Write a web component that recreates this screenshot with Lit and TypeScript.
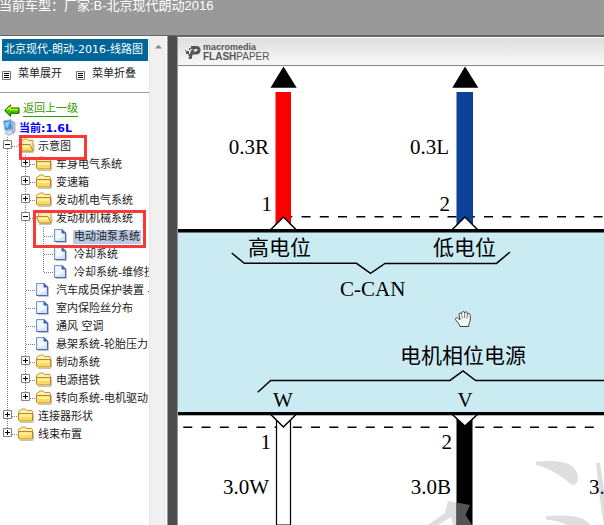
import { LitElement, html, css, svg, nothing } from "lit";
import { customElement, property, state } from "lit/decorators.js";
import { classMap } from "lit/directives/class-map.js";

interface TreeNode {
  label: string;
  children?: TreeNode[];
  folder?: boolean;
  open?: boolean;
  selected?: boolean;
  mark?: "single" | "pair";
}

const folder = (label: string): TreeNode => ({ label, folder: true });

const TREE: TreeNode[] = [
  {
    label: "示意图",
    folder: true,
    open: true,
    mark: "single",
    children: [
      folder("车身电气系统"),
      folder("变速箱"),
      folder("发动机电气系统"),
      {
        label: "发动机机械系统",
        folder: true,
        open: true,
        mark: "pair",
        children: [
          { label: "电动油泵系统", selected: true },
          { label: "冷却系统" },
          { label: "冷却系统-维修技" },
        ],
      },
      { label: "汽车成员保护装置 -" },
      { label: "室内保险丝分布" },
      { label: "通风 空调" },
      { label: "悬架系统-轮胎压力" },
      folder("制动系统"),
      folder("电源搭铁"),
      folder("转向系统-电机驱动"),
    ],
  },
  folder("连接器形状"),
  folder("线束布置"),
];

const closedFolder = svg`
  <path d="M2 15.500h12.500q1 0 1-1v-8" fill="none" stroke="#aaa" stroke-opacity=".7"/>
  <path d="M.5 12.500V5l1-1.500h1l1-1.500h4l1 1.500h5.500l.5 1v8.500z" fill="#fff0b0" stroke="#c79a2e"/>
  <path d="M.5 6.500h14v7.500h-13l-1-1z" fill="#ffd95c" stroke="#b8892a"/>
  <path d="M1.500 7.500h12v2.500h-12z" fill="#fff0a0"/>`;

const openFolder = svg`
  <path d="M3 15.500h12l1-2v-6" fill="none" stroke="#aaa" stroke-opacity=".7"/>
  <path d="M2.500 12V4.500l1-1h1l1-1.500h4l1 1.500h4.500v10.500h-11z" fill="#fff0b0" stroke="#c79a2e"/>
  <path d="M.5 7.500h11.500l3 6.500h-12z" fill="#ffdf6a" stroke="#b8892a"/>
  <path d="M2 8.500h9.500l1 2h-9.500z" fill="#fff3b0"/>`;

const filePage = svg`
  <path d="M2 15.500h10.500V6" fill="none" stroke="#aaa" stroke-opacity=".7"/>
  <path d="M.5 2.500h7.500l3.500 3.500v8.500h-11z" fill="#d3e4fb" stroke="#7a94d4"/>
  <path d="M1.500 3.500h6v3.500h2v3l-8 3z" fill="#f3f8ff"/>
  <path d="M.5 14.500h11V6" fill="none" stroke="#4a68b4"/>
  <path d="M8 2.500v3.500h3.500z" fill="#4766b2" stroke="#4766b2"/>`;

@customElement("tree-view")
export class TreeView extends LitElement {
  @property({ attribute: false }) nodes: TreeNode[] = [];

  static styles = css`
    :host { display: block; }
    ul { list-style: none; margin: 0; padding: 0; }
    .row {
      position: relative;
      display: flex;
      align-items: center;
      height: 18px;
      white-space: nowrap;
    }
    .cell { flex: none; width: 18px; height: 18px; display: block; }
    .toggle { border: 0; padding: 0; background: none; cursor: pointer; }
    .label {
      color: #222;
      text-decoration: none;
      margin: 2px 0 0 1px;
      padding: 0 1px;
      line-height: 14px;
    }
    .selected { background: #b9cae8; }
    .mark {
      position: absolute;
      box-sizing: border-box;
      border: 3px solid #f93838;
      pointer-events: none;
      z-index: 1;
    }
    .single { left: 19px; top: -2px; width: 68px; height: 25px; }
    .pair { left: 33px; top: 1px; width: 113px; height: 38px; }
  `;

  private flip(node: TreeNode) {
    node.open = !node.open;
    this.requestUpdate();
  }

  private guide(d: string) {
    return svg`<path d=${d} stroke="#808080" stroke-dasharray="1 1" fill="none"/>`;
  }

  private renderNode(node: TreeNode, trail: boolean[], last: boolean): unknown {
    const lines = this.guide(last ? "M7.5 0V10M8 9.500H18" : "M7.5 0V18M8 9.500H18");
    return html`<li>
      <div class="row">
        ${trail.map((on) => html`<svg class="cell" aria-hidden="true">${on ? this.guide("M7.5 0V18") : nothing}</svg>`)}
        ${node.folder
          ? html`<button class="toggle" aria-label=${node.label} aria-expanded=${!!node.open} @click=${() => this.flip(node)}>
              <svg class="cell">
                ${lines}
                <path d="M3.500 3.500h8v8h-8z" fill="#fff" stroke="#808080" />
                <path d=${node.open ? "M5 7.500h5" : "M5 7.500h5M7.500 5v5"} stroke="#000" />
              </svg>
            </button>`
          : html`<svg class="cell" aria-hidden="true">${lines}</svg>`}
        <svg class="cell" aria-hidden="true">${node.folder ? (node.open ? openFolder : closedFolder) : filePage}</svg>
        <a href="#" class=${classMap({ label: true, selected: !!node.selected })}>${node.label}</a>
        ${node.mark ? html`<span class="mark ${node.mark}"></span>` : nothing}
      </div>
      ${node.children && node.open ? this.renderList(node.children, [...trail, !last]) : nothing}
    </li>`;
  }

  private renderList(nodes: TreeNode[], trail: boolean[]): unknown {
    return html`<ul>${nodes.map((n, i) => this.renderNode(n, trail, i === nodes.length - 1))}</ul>`;
  }

  render() {
    return this.renderList(this.nodes, []);
  }
}

@customElement("wiring-diagram")
export class WiringDiagram extends LitElement {
  static styles = css`
    :host { display: block; }
    .sheet { display: block; width: 100%; height: auto; }
    .text {
      font-family: "Liberation Serif", "Noto Sans CJK SC", serif;
      font-size: 21px;
      fill: #000;
    }
    .end { text-anchor: end; }
    .mid { text-anchor: middle; }
    .line { fill: none; stroke: #000; stroke-width: 1.5; }
    .dash { fill: none; stroke: #000; stroke-width: 1.5; stroke-dasharray: 9 9.25; }
    .tip { fill: #fff; stroke: #000; stroke-width: 1.5; }
    .stain { fill: #808080; fill-opacity: 0.26; }
    .stain-dark { fill: #555; }
  `;

  render() {
    return html`<svg class="sheet" viewBox="178 66 426 459" role="img" aria-label="C-CAN">
      <rect x="178" y="230" width="426" height="184" fill="#cbebf2" />
      <path class="dash" d="M283.300 216.700H604" />
      <path class="dash" d="M183.300 427.300H600" />
      <path d="M283.500 66.500L296.700 87.700H270.500zM465 66.500L478.300 87.700H452.300z" />
      <rect x="275.500" y="92" width="15.500" height="137" fill="#f00" />
      <rect x="456.500" y="92" width="16.500" height="137" fill="#0b4199" />
      <path d="M276.500 416V525H290.500V416" fill="#fff" stroke="#000" stroke-width="1.200" />
      <rect x="456.500" y="416" width="16" height="109" />
      <path class="tip" d="M270.800 229.500L283.400 217L296 229.500M452.300 229.500L464.900 217L477.500 229.500" />
      <path class="tip" d="M270.800 414.500L283.400 427L296 414.500M452.300 414.500L464.900 426L477.500 414.500" />
      <rect x="178" y="229" width="426" height="3.500" />
      <rect x="178" y="412" width="426" height="3.300" />
      <path class="line" d="M231.700 253L244.300 263.300H356.500L370.500 273.300L385 263.400H496.500L510 252" />
      <path class="line" d="M257.700 392.300L270.700 380.400H450L463 371L475.700 380.600H604" />

      <text class="text end" x="269" y="154">0.3R</text>
      <text class="text end" x="449" y="154">0.3L</text>
      <text class="text end" x="272" y="211">1</text>
      <text class="text end" x="450" y="211">2</text>
      <text class="text" x="248" y="255">高电位</text>
      <text class="text" x="433" y="255">低电位</text>
      <text class="text" x="340" y="296">C-CAN</text>
      <text class="text" x="400" y="363">电机相位电源</text>
      <text class="text mid" x="283" y="407">W</text>
      <text class="text mid" x="465" y="407">V</text>
      <text class="text end" x="271" y="449">1</text>
      <text class="text end" x="452" y="449">2</text>
      <text class="text end" x="269" y="494">3.0W</text>
      <text class="text end" x="451" y="494">3.0B</text>
      <text class="text" x="589" y="494">3.</text>

      <path class="stain" d="M536 461.500C550 460.500 560 460.500 566 463C574 466 578 472 578 478C578 483 575 486 571 484.500C560 474 548 468 536 464.500z" />
      <path class="stain" d="M546 516C560 515 575 515 583 519C587 521 589 523 590 525H568C561 522 553 520 546 519.500z" />
      <path class="stain" d="M596 463L600 462.500L604 490V525L600 500z" />
      <path class="stain" d="M428 525L445 513L448 501L456.500 502.500V525H453L451 517L438 525z" />
      <path class="stain-dark" d="M456.500 502.500L470 505L465.500 515L472 525H456.500z" />

      <path
        d="M460 326.500C459 323 456.500 321.500 455.500 319.500C455 318 457 317 458.500 318.500L460 320L459 314.500C459 312.500 461 312.500 461.500 314L462 312.500C462.500 311 464.500 311 464.700 313C465 311 467.500 311.500 467.500 314C468.500 312.800 470.300 313.500 470.300 315.500C470.500 319 470.500 321.500 468.800 324V326.500z"
        fill="#f8f8f8" stroke="#444" stroke-width="1" />
      <path d="M461.500 314.500L462.500 318.500M464.700 313V318M467.500 314L467 318.500" stroke="#555" stroke-width="0.800" />
    </svg>`;
  }
}

@customElement("app-root")
export class AppRoot extends LitElement {
  @state() private nodes = TREE;

  private setAll(open: boolean) {
    const walk = (n: TreeNode): TreeNode => ({ ...n, open, children: n.children?.map(walk) });
    this.nodes = this.nodes.map(walk);
  }

  static styles = css`
    :host {
      display: flex;
      flex-direction: column;
      height: 100vh;
      overflow: hidden;
      font: 11px/18px "DejaVu Sans", "Noto Sans CJK SC", sans-serif;
      color: #222;
      background: #999;
    }
    .top {
      flex: none;
      box-sizing: border-box;
      height: 36px;
      border-bottom: 1px solid #666;
      color: #fff;
      font: 13px/18px "Liberation Sans", "Noto Sans CJK SC", sans-serif;
      white-space: nowrap;
    }
    .top span { display: block; margin: -3px 0 0 -1px; }
    .frames { flex: 1; min-height: 0; display: flex; }
    .side { flex: none; width: 149px; background: #fff; overflow: hidden; white-space: nowrap; }
    .bar {
      flex: none;
      box-sizing: border-box;
      width: 18px;
      background: #f0f0f0;
      border-left: 1px solid #e6e6e6;
      border-right: 1px solid #fff;
      padding: 8px 4px;
    }
    .bar svg { display: block; width: 9px; height: 5px; }
    .split { flex: none; width: 9px; background: #4d4d4d; border: solid #999; border-width: 0 1px; }
    .title {
      margin: 3px 1px 0 2px;
      padding: 0 2px;
      height: 22px;
      font-size: 11px;
      font-weight: 400;
      line-height: 22px;
      background: #069;
      color: #fff;
      overflow: hidden;
    }
    .tools {
      display: flex;
      gap: 14px;
      padding: 4px 2px 0;
      height: 27px;
      border-bottom: 1px solid #999;
    }
    .tools button {
      display: flex;
      align-items: center;
      gap: 7px;
      height: 18px;
      border: 0;
      padding: 0;
      background: none;
      font: inherit;
      color: inherit;
      cursor: pointer;
    }
    .tools svg { width: 9px; height: 9px; margin-top: 2px; }
    .back { display: flex; align-items: center; gap: 3px; margin-top: 6px; height: 19px; padding-left: 4px; }
    .back svg { width: 16px; height: 13px; margin-top: 3px; }
    .back a { color: #390; text-decoration: none; border-bottom: 1px solid #390; line-height: 15px; }
    .root { display: flex; align-items: center; gap: 1px; height: 19px; padding-left: 2px; font-weight: 700; color: #00f; }
    .root svg { width: 16px; height: 17px; }
    .root span { line-height: 19px; margin-top: 1px; }
    .main {
      flex: 1;
      min-width: 0;
      background: #fff;
      display: flex;
      flex-direction: column;
      overflow: hidden;
      border-top: 1px solid #666;
    }
    .paper {
      flex: none;
      box-sizing: border-box;
      height: 29px;
      display: flex;
      align-items: center;
      gap: 2px;
      padding-left: 7px;
      border-top: 1px solid #fff;
      border-bottom: 1px solid #888;
      background: linear-gradient(#dedede, #f8f8f8);
      color: #555;
      font: 10px/9px "Liberation Sans", sans-serif;
    }
    .paper svg { width: 16px; height: 16px; }
    .paper span { display: block; }
    .paper .maker { font-size: 9px; font-weight: 700; }
  `;

  private listIcon() {
    return html`<svg viewBox="0 0 9 9" aria-hidden="true">
      <path d="M.5.5h8v8h-8z" fill="#fff" stroke="#777" />
      <path d="M2 2.500h5M2 4.500h5M2 6.500h5" stroke="#000" />
    </svg>`;
  }

  render() {
    return html`
      <header class="top"><span>当前车型：厂家:B-北京现代朗动2016</span></header>
      <div class="frames">
        <nav class="side">
          <h1 class="title">北京现代-朗动-2016-线路图</h1>
          <div class="tools">
            <button @click=${() => this.setAll(true)}>${this.listIcon()}菜单展开</button>
            <button @click=${() => this.setAll(false)}>${this.listIcon()}菜单折叠</button>
          </div>
          <div class="back">
            <svg viewBox="0 0 16 13" aria-hidden="true">
              <path d="M.7 6.500L6.500.8V4H15V9.300H6.500V12.300z" fill="#2fd000" stroke="#1d5200" />
              <path d="M3 6L6 3.300V5.500H14" fill="none" stroke="#e8f000" stroke-width="1.500" />
            </svg>
            <a href="#">返回上一级</a>
          </div>
          <div class="root">
            <svg viewBox="0 0 16 17" aria-hidden="true">
              <path d="M1.500 2L9 .7L10.500 10L3 11.500z" fill="#3d8fe8" stroke="#9bb8d8" />
              <path d="M3 3.500L8 2.500L6 8L4 9z" fill="#8fd0ff" />
              <path d="M10.500 2L13 3.500V13L10.500 14z" fill="#b8c8dc" stroke="#7f95b4" stroke-width=".7" />
              <path d="M5 12L9 11.500L12 14L7 16.300L3 14.500z" fill="#d4deec" stroke="#7f95b4" stroke-width=".7" />
            </svg>
            <span>当前:1.6L</span>
          </div>
          <tree-view .nodes=${this.nodes}></tree-view>
        </nav>
        <div class="bar" aria-hidden="true">
          <svg viewBox="0 0 9 5"><path d="M1 4.500L4.500.8L8 4.500z" fill="#888" /></svg>
        </div>
        <div class="split"></div>
        <main class="main">
          <div class="paper">
            <svg viewBox="0 0 16 16" aria-hidden="true">
              <path d="M6 3.500H11.500C15.500 3.500 14.500 9 11 9H7.500" fill="none" stroke="#555" stroke-width="3" />
              <path d="M9.500 4L6.500 15H3.500L6 6.500z" fill="#555" />
              <path d="M1 7h3v3h-3zM4 4h1.500v2h-1.500zM0 6h1v1h-1zM3.500 10h2v2h-2z" fill="#555" />
            </svg>
            <div>
              <span class="maker">macromedia</span>
              <span><b>FLASH</b>PAPER</span>
            </div>
          </div>
          <wiring-diagram></wiring-diagram>
        </main>
      </div>
    `;
  }
}
